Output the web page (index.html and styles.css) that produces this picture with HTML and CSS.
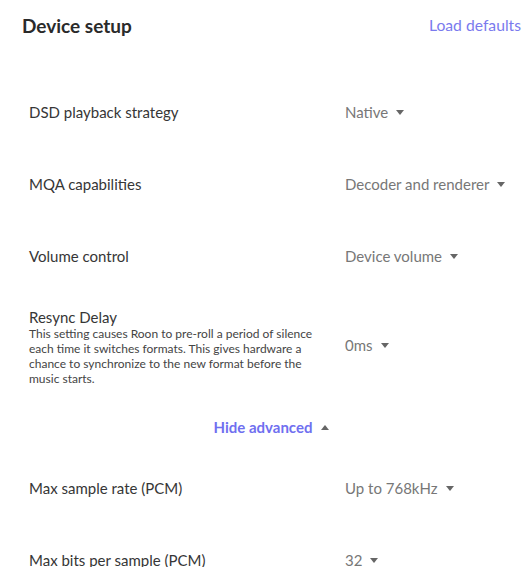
FILE: index.html
```html
<!doctype html>
<html lang="en">
<head>
    <meta charset="UTF-8">
    <meta name="viewport" content="width=device-width, initial-scale=1">
    <title>Device setup</title>
    <link rel="stylesheet" href="styles.css">
</head>
<body>
<div class="container">
    <div class="header">
        <h1 class="title">Device setup</h1>
        <a class="link" href="#">Load defaults</a>
    </div>

    <div class="setting">
        <div class="label">DSD playback strategy</div>
        <div class="value">Native <span class="caret"></span></div>
    </div>

    <div class="setting">
        <div class="label">MQA capabilities</div>
        <div class="value">Decoder and renderer <span class="caret"></span></div>
    </div>

    <div class="setting">
        <div class="label">Volume control</div>
        <div class="value">Device volume <span class="caret"></span></div>
    </div>

    <div class="setting">
        <div class="label">
            Resync Delay
            <div class="description">This setting causes Roon to pre-roll a period of silence each time it switches formats. This gives hardware a chance to synchronize to the new format before the music starts.</div>
        </div>
        <div class="value shifted">0ms <span class="caret"></span></div>
    </div>

    <div class="advanced">
        <a class="toggle" href="#">Hide advanced</a>
        <span class="caret up"></span>
    </div>

    <div class="setting">
        <div class="label">Max sample rate (PCM)</div>
        <div class="value">Up to 768kHz <span class="caret"></span></div>
    </div>

    <div class="setting">
        <div class="label">Max bits per sample (PCM)</div>
        <div class="value">32 <span class="caret"></span></div>
    </div>
</div>
</body>
</html>
```

FILE: styles.css
```css
body {
    margin: 0;
    padding: 0;
    font-family: Lato, "Open Sans", sans-serif;
    color: #333;
    background: #fff;
    height: 100%;
    overflow: hidden;
}

.container {
    padding: 0 7px 0 22px;
}

.header {
    display: flex;
    justify-content: space-between;
    align-items: center;
    height: 50px;
    margin-bottom: 26px;
}

.title {
    margin: 0;
    font-size: 19px;
    font-weight: 700;
    color: #2a2a2a;
}

.link {
    font-size: 15.7px;
    color: #7a7aee;
    text-decoration: none;
}

.setting {
    display: grid;
    grid-template-columns: 316px auto;
    align-items: center;
    min-height: 40px;
    padding: 16px 0 16px 7px;
}

.label {
    font-size: 15px;
    line-height: 18px;
    color: #363636;
}

.description {
    font-size: 12px;
    line-height: 15px;
    color: #444;
    max-width: 292px;
}

.value {
    font-size: 15px;
    color: #777;
    display: flex;
    align-items: center;
    gap: 8px;
}

.value.shifted {
    margin-bottom: 4px;
}

.caret {
    display: inline-block;
    width: 0;
    height: 0;
    border-left: 4px solid transparent;
    border-right: 4px solid transparent;
    border-top: 5px solid #666;
}

.caret.up {
    border-top: none;
    border-bottom: 5px solid #666;
}

.advanced {
    display: flex;
    justify-content: center;
    align-items: center;
    gap: 9px;
    height: 50px;
}

.toggle {
    font-size: 15px;
    font-weight: 700;
    color: #6f6ff0;
    text-decoration: none;
}
```
